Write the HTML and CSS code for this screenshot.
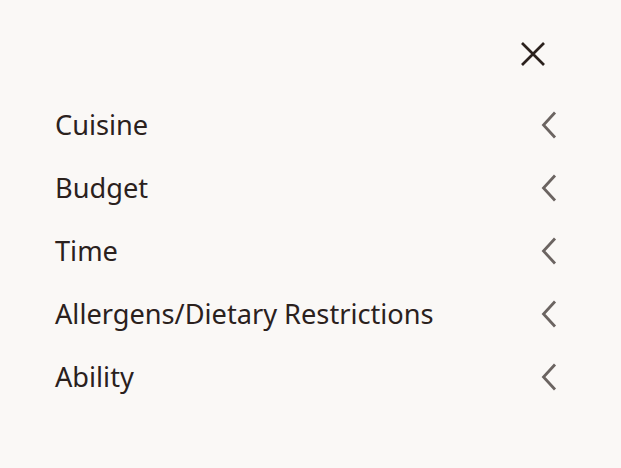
FILE: index.html
```html
<!DOCTYPE html>
<html>
<head>
<meta charset="utf-8">
<link rel="stylesheet" href="styles.css">
</head>
<body>
<div class="panel">
  <div class="top">
    <button class="close" aria-label="Close">
      <svg width="26" height="26" viewBox="0 0 26 26"><path d="M2 2 L24 24 M24 2 L2 24" stroke="#2b211d" stroke-width="2.7" stroke-linecap="butt" fill="none"/></svg>
    </button>
  </div>
  <ul class="menu">
    <li class="item"><span class="label">Cuisine</span><svg class="chev" width="16" height="28" viewBox="0 0 16 28"><path d="M14 1.5 L2.5 14 L14 26.5" stroke="#6b6461" stroke-width="2.8" fill="none"/></svg></li>
    <li class="item"><span class="label">Budget</span><svg class="chev" width="16" height="28" viewBox="0 0 16 28"><path d="M14 1.5 L2.5 14 L14 26.5" stroke="#6b6461" stroke-width="2.8" fill="none"/></svg></li>
    <li class="item"><span class="label">Time</span><svg class="chev" width="16" height="28" viewBox="0 0 16 28"><path d="M14 1.5 L2.5 14 L14 26.5" stroke="#6b6461" stroke-width="2.8" fill="none"/></svg></li>
    <li class="item"><span class="label">Allergens/Dietary Restrictions</span><svg class="chev" width="16" height="28" viewBox="0 0 16 28"><path d="M14 1.5 L2.5 14 L14 26.5" stroke="#6b6461" stroke-width="2.8" fill="none"/></svg></li>
    <li class="item"><span class="label">Ability</span><svg class="chev" width="16" height="28" viewBox="0 0 16 28"><path d="M14 1.5 L2.5 14 L14 26.5" stroke="#6b6461" stroke-width="2.8" fill="none"/></svg></li>
  </ul>
</div>
</body>
</html>
```
FILE: styles.css
```css
html, body {
  margin: 0;
  padding: 0;
  background: #faf8f6;
}
body {
  width: 621px;
  height: 468px;
  font-family: "Noto Sans", sans-serif;
  color: #2b211d;
}
.panel {
  padding: 41px 64px 0 55px;
}
.top {
  display: flex;
  justify-content: flex-end;
  padding-right: 11px;
}
.close {
  border: 0;
  background: none;
  padding: 0;
  width: 26px;
  height: 26px;
  display: block;
}
.close svg { display: block; }
.menu {
  list-style: none;
  margin: 0;
  padding: 0;
  margin-top: 26px;
}
.item {
  display: flex;
  align-items: center;
  justify-content: space-between;
  height: 63px;
}
.label {
  font-size: 27.2px;
  line-height: 32px;
}
.chev { display: block; }
```
